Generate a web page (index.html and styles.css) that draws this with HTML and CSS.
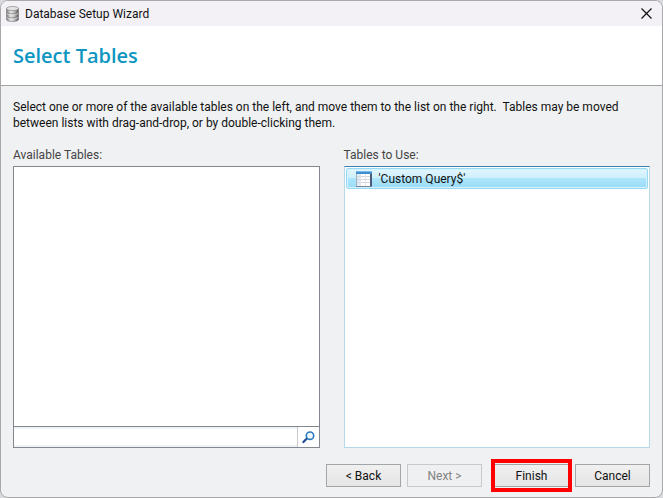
FILE: index.html
```
<!DOCTYPE html>
<html lang="en">
<head>
    <meta charset="UTF-8">
    <meta name="viewport" content="width=device-width, initial-scale=1.0">
    <title>Database Setup Wizard</title>
    <link rel="stylesheet" href="styles.css">
</head>
<body>
    <div class="window">
        <div class="titlebar">
            <svg class="app-icon" width="13" height="16" viewBox="0 0 13 16">
                <defs>
                    <linearGradient id="metal" x1="0" x2="1" y1="0" y2="0">
                        <stop offset="0" stop-color="#777"/>
                        <stop offset="0.35" stop-color="#e8e8e8"/>
                        <stop offset="0.65" stop-color="#bbb"/>
                        <stop offset="1" stop-color="#555"/>
                    </linearGradient>
                </defs>
                <path d="M0.5 2.5v11c0 1.2 2.7 2 6 2s6-.8 6-2v-11z" fill="url(#metal)" stroke="#777" stroke-width=".6"/>
                <path d="M.5 6.2c1 1.3 3 1.7 6 1.7s5-.4 6-1.7M.5 10.2c1 1.3 3 1.7 6 1.7s5-.4 6-1.7" fill="none" stroke="#777" stroke-width=".8"/>
                <path d="M.8 7.2c1 1.3 3 1.7 5.7 1.7s4.7-.4 5.7-1.7M.8 11.2c1 1.3 3 1.7 5.7 1.7s4.7-.4 5.7-1.7" fill="none" stroke="#eee" stroke-width=".7"/>
                <ellipse cx="6.5" cy="2.5" rx="6" ry="2" fill="#e4e4e4" stroke="#888" stroke-width=".7"/>
            </svg>
            <span class="caption">Database Setup Wizard</span>
            <button class="close" type="button" aria-label="Close">
                <svg width="11" height="11" viewBox="0 0 11 11">
                    <path d="M.5.5l10 10M10.5.5l-10 10" stroke="#111" stroke-width="1.2" fill="none"/>
                </svg>
            </button>
        </div>

        <div class="header">
            <h1>Select Tables</h1>
        </div>

        <div class="content">
            <p class="intro">Select one or more of the available tables on the left, and move them to the list on the right.&nbsp; Tables may be moved between lists with drag-and-drop, or by double-clicking them.</p>

            <div class="lists">
                <div class="column">
                    <label class="list-label" for="search">Available Tables:</label>
                    <div class="box available">
                        <ul class="items"></ul>
                        <div class="search">
                            <input type="text" id="search">
                            <button type="button" aria-label="Search">
                                <svg width="13" height="13" viewBox="0 0 13 13">
                                    <path d="M5.4 7L1.4 11" stroke="#1d4f91" stroke-width="2.2" stroke-linecap="round"/>
                                    <circle cx="8" cy="4.7" r="3.7" fill="#f4faff" stroke="#2a7ac0" stroke-width="1.6"/>
                                </svg>
                            </button>
                        </div>
                    </div>
                </div>

                <div class="column">
                    <span class="list-label" id="useLabel">Tables to Use:</span>
                    <ul class="box use items" role="listbox" aria-labelledby="useLabel">
                        <li class="item" role="option" aria-selected="true">
                            <svg width="16" height="16" viewBox="0 0 16 16">
                                <rect x="0" y="0" width="16" height="16" fill="#a9b0b8"/>
                                <rect x="0" y="0" width="16" height="3" fill="#3f8fd0"/>
                                <rect x="0" y="0" width="16" height="1" fill="#7cb9e8"/>
                                <rect x="1" y="3" width="13" height="12" fill="#fff"/>
                                <rect x="1" y="3" width="3" height="12" fill="#dcecf8"/>
                                <path d="M1 5.5h13M1 8.5h13M1 11.5h13" stroke="#d3d6dc"/>
                                <path d="M4.5 3v12M9.5 3v12" stroke="#e2e4e9"/>
                                <path d="M15 3v13" stroke="#4a5a78" stroke-width="2"/>
                                <path d="M0 15.5h16" stroke="#7d8694"/>
                            </svg>
                            <span>'Custom Query$'</span>
                        </li>
                    </ul>
                </div>
            </div>

            <div class="buttons">
                <button class="btn" type="button">&lt; Back</button>
                <button class="btn" type="button" disabled>Next &gt;</button>
                <button class="btn finish" type="button">Finish</button>
                <button class="btn" type="button">Cancel</button>
            </div>
        </div>
    </div>
</body>
</html>
```
FILE: styles.css
```
* {
    box-sizing: border-box;
}
body {
    margin: 0;
    background: #d8dadd;
    font-family: Roboto, "Open Sans", sans-serif;
    font-size: 12px;
    line-height: 16px;
    color: #111;
}
.window {
    display: flex;
    flex-direction: column;
    height: 100vh;
    border: 1px solid #a9a9ab;
    border-radius: 8px;
    background: #f0f1f3;
    overflow: hidden;
}
.titlebar {
    display: flex;
    align-items: center;
    height: 25px;
    padding: 0 10px 0 5px;
    background: #f3f1f6;
}
.caption {
    flex: 1;
    margin-left: 6px;
}
.close {
    display: flex;
    padding: 0;
    border: none;
    background: none;
}
.header {
    padding: 16px 12px;
    background: #fff;
    border-bottom: 1px solid #a0a4a4;
}
h1 {
    margin: 0;
    font-family: "Open Sans", "Noto Sans", sans-serif;
    font-size: 20px;
    line-height: 27px;
    font-weight: 600;
    color: #0d96c2;
}
.content {
    flex: 1;
    display: flex;
    flex-direction: column;
    padding: 13px 12px 10px;
}
.intro {
    margin: 0 0 16px;
}
.lists {
    flex: 1;
    display: grid;
    grid-template-columns: 1fr 1fr;
    gap: 24px;
}
.column {
    display: flex;
    flex-direction: column;
}
.list-label {
    margin-bottom: 3px;
    color: #444;
}
.box {
    flex: 1;
    background: #fff;
    border: 1px solid #828790;
}
.items {
    margin: 0;
    padding: 0;
    list-style: none;
}
.available {
    display: flex;
    flex-direction: column;
}
.available .items {
    flex: 1;
}
.search {
    display: flex;
    height: 21px;
    border-top: 1px solid #828790;
}
.search input {
    flex: 1;
    min-width: 0;
    padding: 0 4px;
    border: none;
    border-top: 2px solid #f0f3f8;
    border-bottom: 2px solid #f0f1f3;
    font: inherit;
}
.search button {
    display: flex;
    align-items: center;
    justify-content: center;
    width: 22px;
    padding: 0;
    border: none;
    border-left: 1px solid #c8cacc;
    background: #fff;
}
.use {
    padding: 1px;
    border-color: #3c7fb1 #b5d9ea #b5d9ea;
}
.use.items {
    padding: 1px;
}
.item {
    display: flex;
    align-items: center;
    gap: 7px;
    height: 21px;
    padding: 0 9px;
    border: 1px solid #98d9f5;
    border-radius: 2px;
    background: linear-gradient(#e2f6fe, #cdeffc 48%, #ade5fb 50%, #9bdcf8);
    box-shadow: inset 0 0 0 1px #d3f1fd;
}
.buttons {
    display: flex;
    justify-content: flex-end;
    gap: 6px;
    margin-top: 16px;
}
.btn {
    width: 75px;
    height: 23px;
    padding: 0;
    border: 1px solid #a3a5a7;
    background: linear-gradient(#f0f0f0, #e5e5e5);
    font: inherit;
    color: #111;
}
.btn:disabled {
    border-color: #c6cacd;
    background: #eff0f1;
    color: #838383;
}
.finish {
    position: relative;
    margin-left: 6px;
}
/* red highlight frame */
.finish::after {
    content: "";
    position: absolute;
    inset: -6px -4px;
    border: 4px solid #f00;
}
```
